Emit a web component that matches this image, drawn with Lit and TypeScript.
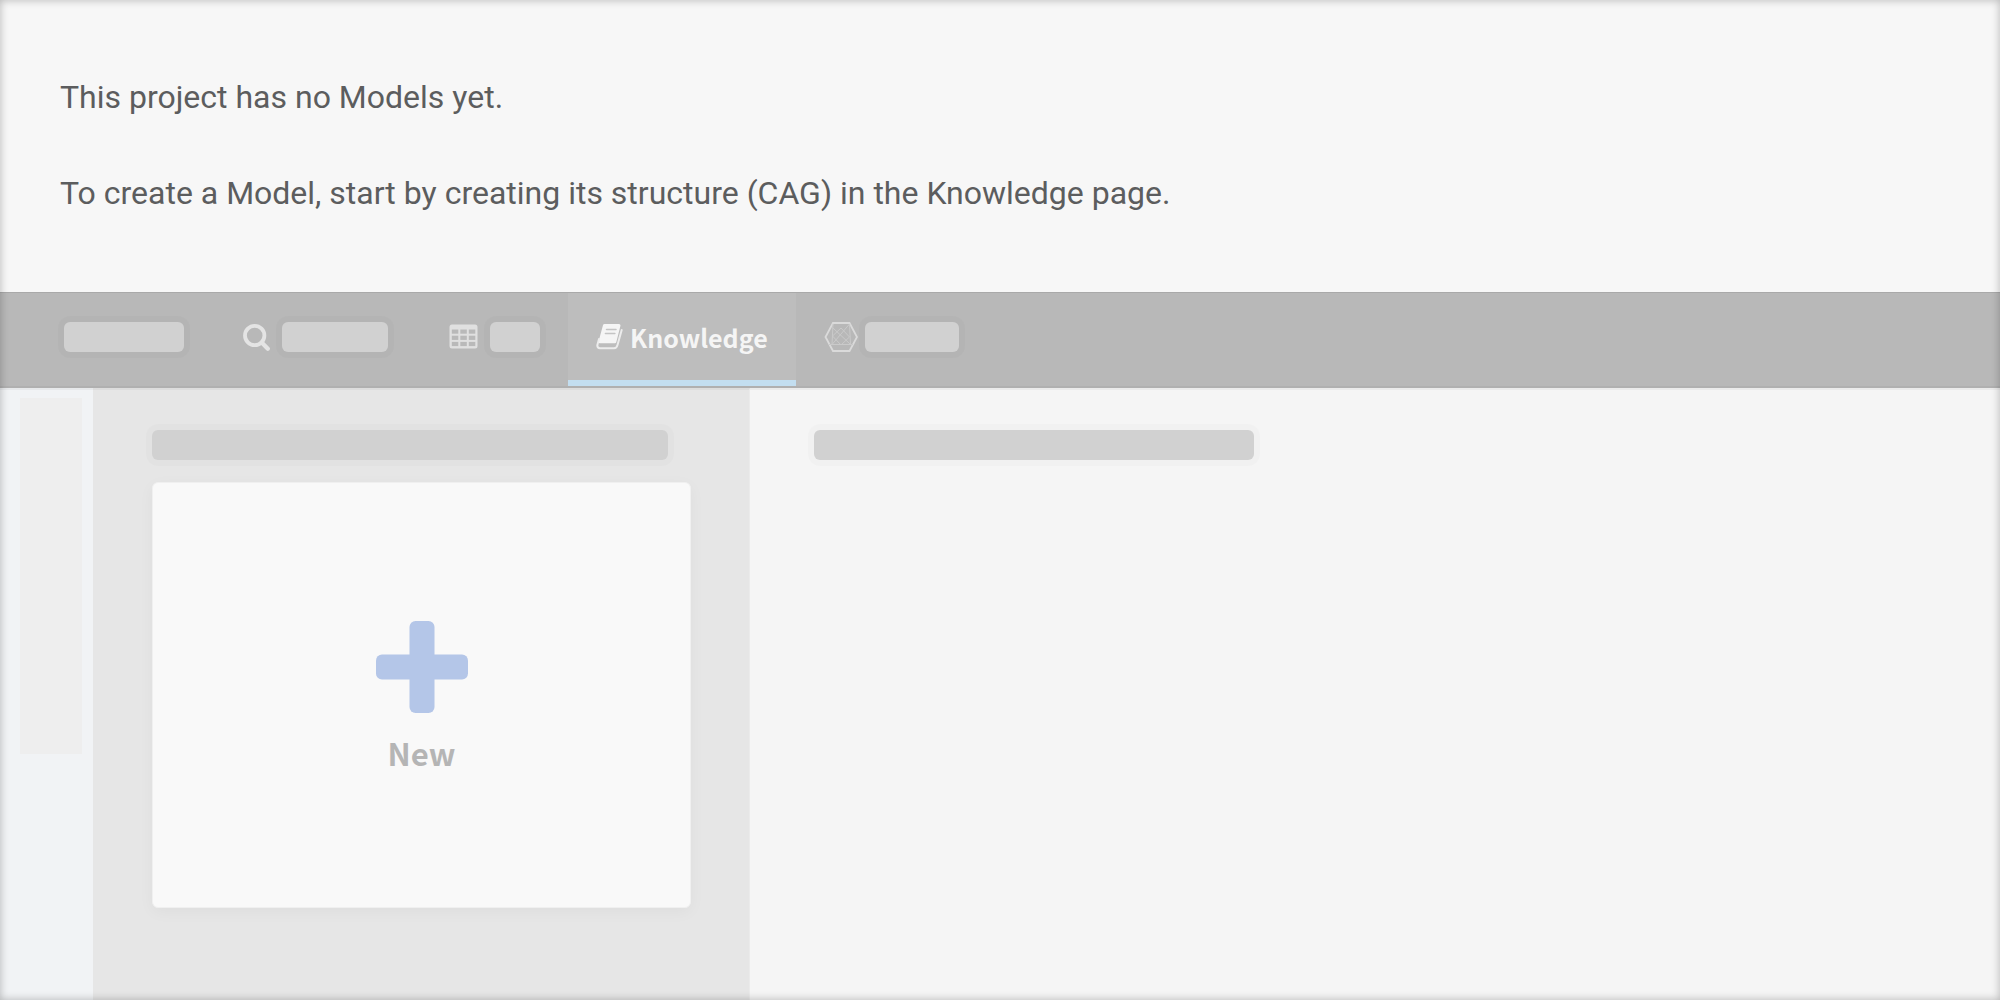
import { LitElement, html, css, svg } from "lit";
import { customElement } from "lit/decorators.js";

const searchIcon = svg`
  <svg class="icon" width="27" height="30" viewBox="0 0 27 30" fill="none" stroke="#e4e4e4" aria-hidden="true">
    <circle cx="11.700" cy="13.500" r="9.700" stroke-width="3.800"></circle>
    <path d="M18.700 20.500L24.800 26.800" stroke-width="4.200" stroke-linecap="round"></path>
  </svg>`;

const tableIcon = svg`
  <svg class="icon" width="34" height="30" viewBox="0 0 34 30" aria-hidden="true">
    <rect x="5.500" y="2.500" width="28" height="24" rx="2.500" fill="#e0e0e0"></rect>
    <g fill="#b9b9b9">
      <rect x="7.800" y="7.500" width="6.500" height="4.200"></rect><rect x="16.300" y="7.500" width="6.500" height="4.200"></rect><rect x="24.800" y="7.500" width="6.500" height="4.200"></rect>
      <rect x="7.800" y="13.700" width="6.500" height="4.200"></rect><rect x="16.300" y="13.700" width="6.500" height="4.200"></rect><rect x="24.800" y="13.700" width="6.500" height="4.200"></rect>
      <rect x="7.800" y="19.900" width="6.500" height="4.200"></rect><rect x="16.300" y="19.900" width="6.500" height="4.200"></rect><rect x="24.800" y="19.900" width="6.500" height="4.200"></rect>
    </g>
  </svg>`;

const bookIcon = svg`
  <svg class="icon" width="27" height="30" viewBox="0 0 27 30" fill="none" stroke-linejoin="round" stroke-linecap="round" aria-hidden="true">
    <path d="M8.500 3.500H23L18.800 19.800H4Z" fill="#f5f5f5" stroke="#f5f5f5" stroke-width="3"></path>
    <path d="M25.700 8L21.500 23Q20.600 26.300 18 26.300H4Q1.300 26.300 1.300 23.200L3 17" stroke="#ececec" stroke-width="2"></path>
    <path d="M10.500 7.600H20M9.400 11.600H18.900" stroke="#c4c4c4" stroke-width="1.500"></path>
  </svg>`;

const modelIcon = svg`
  <svg class="icon" width="34" height="32" viewBox="0 0 34 32" fill="none" aria-hidden="true">
    <path d="M9 2H25.500L33 16L25.500 30H9L1.500 16Z" stroke="#dadada" stroke-width="1.800"></path>
    <path d="M8.500 6.500L26.500 23.500M25.500 3L8 23.500M17 7L25.500 16L17 24M9 3L8 23.500M8.500 15L17 24M26.500 23.500L25.500 3M5 23.500H29M17 7L8.500 15" stroke="#cacaca" stroke-width="1"></path>
  </svg>`;

@customElement("app-root")
export class AppRoot extends LitElement {
  static styles = css`
    :host {
      display: flex;
      flex-direction: column;
      position: relative;
      box-sizing: border-box;
      min-height: 100vh;
      background: #f7f7f7;
      color: #5c5d5e;
      font-family: "Roboto", sans-serif;
    }
    :host::after {
      content: "";
      position: absolute;
      inset: 0;
      pointer-events: none;
      box-shadow: inset 0 0 8px rgba(0, 0, 0, 0.27);
    }
    * { box-sizing: border-box; }
    .intro { padding: 73px 60px 75px; font-size: 32px; line-height: 48px; }
    .intro p { margin: 0; }
    .intro p + p { margin-top: 48px; }
    .bar {
      display: flex;
      height: 96px;
      padding-left: 64px;
      background: #b8b8b8;
      border-top: 1px solid #a9a9a9;
      border-bottom: 2px solid #b0b0b0;
    }
    .brand { display: flex; align-items: center; margin-right: 31px; }
    .tab {
      display: flex;
      align-items: center;
      gap: 12px;
      padding: 0 28px;
      color: #f5f5f5;
      text-decoration: none;
    }
    .brand, .tab { padding-bottom: 6px; }
    .close { gap: 7px; }
    .active { background: #bdbdbd; box-shadow: inset 0 -6px #c3def0; }
    .label { font: 700 25px/40px "Noto Sans CJK SC", sans-serif; }
    .icon { flex: none; display: block; }
    .ph {
      height: 30px;
      border-radius: 6px;
      background: #d1d1d1;
      box-shadow: 0 0 0 6px rgba(0, 0, 0, 0.014);
    }
    .bar .ph { box-shadow: 0 0 0 6px rgba(0, 0, 0, 0.02); }
    .w-brand { width: 120px; }
    .w-search { width: 106px; }
    .w-data { width: 50px; }
    .w-model { width: 94px; }
    .body { flex: 1; display: grid; grid-template-columns: 93px 657px 1fr; }
    .rail, .list, .canvas { border-top: 2px solid rgba(0, 0, 0, 0.04); }
    .rail { padding: 8px 11px 0 20px; background: #f1f3f5; }
    .rail-block { height: 356px; background: #eeeeee; }
    .list { padding: 40px 58px 92px 59px; background: #e6e6e6; border-right: 1px solid #ebebeb; }
    .list .ph { margin-right: 23px; }
    .canvas { padding: 40px 64px; background: #f5f5f5; }
    .canvas .ph { max-width: 440px; }
    .new {
      display: flex;
      flex-direction: column;
      align-items: center;
      width: 100%;
      height: 426px;
      margin-top: 22px;
      padding: 138px 0 0;
      border: 1px solid #f0f0f0;
      border-radius: 6px;
      background: #f9f9f9;
      box-shadow: 0 4px 16px rgba(0, 0, 0, 0.04);
      color: #b5b5b5;
      font: 700 31px/48px "Noto Sans CJK SC", sans-serif;
    }
    .new span { margin-top: 16px; }
  `;

  render() {
    return html`
      <header class="intro">
        <p>This project has no Models yet.</p>
        <p>To create a Model, start by creating its structure (CAG) in the Knowledge page.</p>
      </header>
      <nav class="bar" aria-label="Main">
        <div class="brand"><div class="ph w-brand"></div></div>
        <a class="tab" href="#search" aria-label="Search">${searchIcon}<div class="ph w-search"></div></a>
        <a class="tab" href="#data" aria-label="Data">${tableIcon}<div class="ph w-data"></div></a>
        <a class="tab close active" href="#knowledge" aria-current="page">${bookIcon}<span class="label">Knowledge</span></a>
        <a class="tab close" href="#models" aria-label="Models">${modelIcon}<div class="ph w-model"></div></a>
      </nav>
      <main class="body">
        <aside class="rail"><div class="rail-block"></div></aside>
        <section class="list">
          <div class="ph"></div>
          <button class="new" type="button">
            <svg class="icon" width="92" height="92" viewBox="0 0 92 92" fill="#b4c6e8" aria-hidden="true">
              <rect x="33.500" y="0" width="25" height="92" rx="6"></rect>
              <rect x="0" y="33.500" width="92" height="25" rx="6"></rect>
            </svg>
            <span>New</span>
          </button>
        </section>
        <section class="canvas"><div class="ph"></div></section>
      </main>
    `;
  }
}
